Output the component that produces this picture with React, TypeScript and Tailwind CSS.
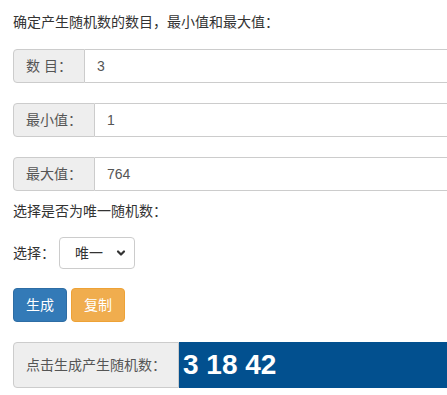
const font = "font-['Helvetica_Neue','Liberation_Sans','Noto_Sans_CJK_SC',sans-serif]";

function InputGroup({ label, value }: { label: string; value: string }) {
  return (
    <div className="flex h-[34px] w-[470px] text-sm">
      <span className="flex items-center px-3 bg-[#eeeeee] border border-[#cccccc] rounded-l text-[#555555] whitespace-pre">
        {label}
      </span>
      <div className="flex-1 flex items-center px-3 border border-l-0 border-[#cccccc] bg-white text-[#555555]">
        {value}
      </div>
    </div>
  );
}

export default function App() {
  return (
    <div className={`${font} w-screen h-screen overflow-hidden bg-white text-[#333333] text-sm`}>
      <div className="pl-[13px] pt-3">
        <p className="leading-5">确定产生随机数的数目，最小值和最大值：</p>

        <div className="mt-[17px] space-y-5">
          <InputGroup label={"数 目："} value="3" />
          <InputGroup label="最小值：" value="1" />
          <InputGroup label="最大值：" value="764" />
        </div>

        <p className="leading-5 mt-[10px]">选择是否为唯一随机数：</p>

        <div className="flex items-center mt-4">
          <span className="mr-1">选择：</span>
          <div className="flex items-center justify-between w-[76px] h-[32px] border border-[#cccccc] rounded bg-white pl-[15px] pr-[8px] text-[#333333]">
            <span>唯一</span>
            <svg width="10" height="10" viewBox="0 0 10 10" fill="none" stroke="#333" strokeWidth="2.2" strokeLinecap="round" strokeLinejoin="round">
              <path d="M2 3.5 L5 6.5 L8 3.5" />
            </svg>
          </div>
        </div>

        <div className="flex gap-1 mt-[19px]">
          <button className="h-[34px] px-3 rounded bg-[#337ab7] border border-[#2e6da4] text-white">生成</button>
          <button className="h-[34px] px-3 rounded bg-[#f0ad4e] border border-[#eea236] text-white">复制</button>
        </div>

        <div className="flex h-[46px] w-[470px] mt-5">
          <span className="flex items-center px-3 bg-[#eeeeee] border border-[#cccccc] rounded-l text-[#555555]">
            点击生成产生随机数：
          </span>
          <div className="flex-1 flex items-center pl-[4px] bg-[#02508f] text-white font-bold text-[28px] font-['Liberation_Sans',Arial,sans-serif]">
            3 18 42
          </div>
        </div>
      </div>
    </div>
  );
}
